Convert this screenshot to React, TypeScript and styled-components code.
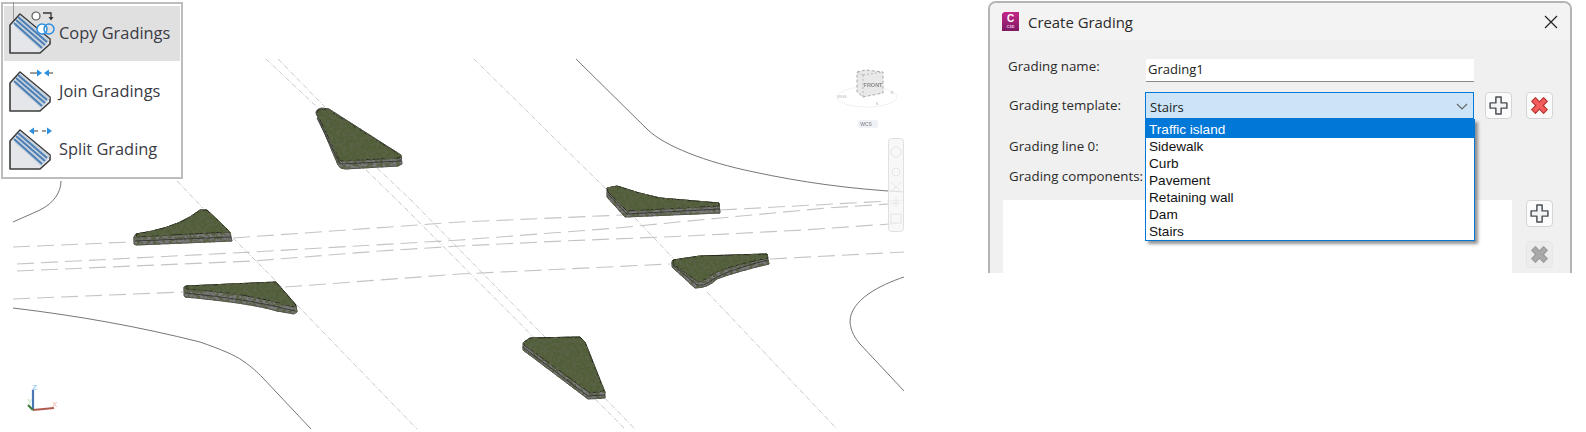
import React from "react";
import styled, { createGlobalStyle } from "styled-components";

const GlobalStyle = createGlobalStyle`
  html, body { margin: 0; padding: 0; background: #fff; }
`;

const Page = styled.div`
  display: flex;
  align-items: flex-start;
  width: 1586px;
  height: 432px;
  overflow: hidden;
  background: #fff;
  font-family: "Open Sans", "Liberation Sans", sans-serif;
`;

/* ---------- drawing area ---------- */
const Viewport = styled.div`
  position: relative;
  flex: 0 0 904px;
  height: 432px;
`;

const Drawing = styled.svg`
  display: block;
  width: 904px;
  height: 432px;
`;

const RibbonMenu = styled.div`
  position: absolute;
  left: 1px;
  top: 2px;
  box-sizing: border-box;
  width: 182px;
  height: 177px;
  padding: 2px 1px 0;
  display: flex;
  flex-direction: column;
  gap: 3px;
  background: #fff;
  border: 2px solid #bdbdbd;
`;

/* stray leader from the drawing that sits on top of the panel */
const Leader = styled.div`
  position: absolute;
  left: 10px;
  top: -2px;
  width: 1px;
  height: 18px;
  background: #9a9a9a;
`;

const MenuRow = styled.div<{ $active?: boolean }>`
  display: flex;
  align-items: center;
  height: 55px;
  flex: none;
  background: ${(p) => (p.$active ? "#e0e0e0" : "transparent")};
  color: #3a3a44;
  font-size: 16.4px;
  white-space: nowrap;
`;

const MenuText = styled.span`
  margin: -2px 0 0 1px;
`;

const MenuIcon = styled.svg`
  flex: none;
  width: 52px;
  height: 55px;
  margin-left: 2px;
`;

/* ---------- dialog ---------- */
const Dialog = styled.div`
  box-sizing: border-box;
  flex: none;
  width: 584px;
  height: 272px;
  margin: 1px 0 0 84px;
  border: 2px solid #b4b4b4;
  border-bottom: none;
  border-radius: 8px 8px 0 0;
  background: #f0f0f0;
  overflow: hidden;
`;

const TitleBar = styled.div`
  display: flex;
  align-items: center;
  height: 37px;
  padding: 0 12px 0 11px;
  background: #f3f3f3;
  color: #2a2a2a;
  font-size: 14.9px;
`;

const AppBadge = styled.svg`
  width: 19px;
  height: 21px;
  margin-right: 8px;
`;

const CloseIcon = styled.svg`
  width: 14px;
  height: 14px;
  margin-left: auto;
`;

const Body = styled.div`
  padding: 18px 0 0 18px;
`;

const FormRow = styled.div<{ $height: number; $gap: number }>`
  display: flex;
  align-items: center;
  height: ${(p) => p.$height}px;
  margin-bottom: ${(p) => p.$gap}px;
`;

const Label = styled.div<{ $inset?: number; $nudge?: number }>`
  flex: none;
  width: 137px;
  padding-left: ${(p) => p.$inset ?? 0}px;
  margin-top: ${(p) => p.$nudge ?? 0}px;
  box-sizing: border-box;
  color: #2b2b2b;
  font-size: 13.3px;
  white-space: nowrap;
  overflow: hidden;
`;

const NameInput = styled.div`
  box-sizing: border-box;
  width: 328px;
  height: 24px;
  margin-left: 1px;
  padding-left: 2px;
  line-height: 21px;
  background: #fff;
  border-bottom: 1px solid #8a8a8a;
  border-top: 1px solid #eee;
  color: #222;
  font-size: 13px;
`;

const ComboWrap = styled.div`
  position: relative;
  width: 329px;
  height: 27px;
  margin-right: 11px;
`;

const ComboField = styled.div`
  box-sizing: border-box;
  display: flex;
  align-items: center;
  justify-content: space-between;
  height: 27px;
  padding: 2px 5px 0 4px;
  background: #cce4f7;
  border: 1px solid #0078d7;
  color: #222;
  font-size: 13px;
`;

const DropList = styled.div`
  position: absolute;
  left: 0;
  top: 27px;
  z-index: 2;
  box-sizing: border-box;
  width: 330px;
  height: 122px;
  background: #fff;
  border: 1px solid #0078d7;
  border-top: none;
  box-shadow: 3px 3px 3px rgba(60, 60, 60, 0.55);
  font-family: "Liberation Sans", Arial, sans-serif;
  font-size: 13.6px;
`;

const DropItem = styled.div<{ $selected?: boolean }>`
  height: ${(p) => (p.$selected ? 19 : 17)}px;
  line-height: ${(p) => (p.$selected ? 21 : 17)}px;
  padding-left: 3px;
  background: ${(p) => (p.$selected ? "#0078d7" : "transparent")};
  color: ${(p) => (p.$selected ? "#fff" : "#111")};
`;

const ToolButton = styled.div<{ $disabled?: boolean }>`
  box-sizing: border-box;
  flex: none;
  display: flex;
  align-items: center;
  justify-content: center;
  width: 27px;
  height: 27px;
  border-radius: 4px;
  background: ${(p) => (p.$disabled ? "#ececec" : "#fbfbfb")};
  border: 1px solid ${(p) => (p.$disabled ? "#e6e6e6" : "#d4d4d4")};
`;

const ComboTools = styled.div`
  display: flex;
  gap: 14px;
`;

const ComponentsArea = styled.div`
  display: flex;
  gap: 14px;
  margin-left: -5px;
`;

const ComponentList = styled.div`
  flex: none;
  width: 509px;
  height: 200px;
  background: #fff;
`;

const SideTools = styled.div`
  display: flex;
  flex-direction: column;
  gap: 14px;
`;

/* ---------- drawing data ---------- */
const kerbLines = [
  "M576 59 L648 130 C665 146 705 162 754 172 C800 182 850 189 904 192",
  "M61 181 C61 192 54 203 40 210 L13 222",
  "M13 308 C80 316 140 327 200 342 C220 349 235 355 243 361 C252 367 258 373 262 377 L311 429",
  "M904 277 C880 285 850 300 850 322 C851 332 855 338 860 344 L904 391",
];

const laneLines = [
  "M13 247 L130 242",
  "M233 238 L460 222 L623 215",
  "M720 210 L890 201 L904 200",
  "M17 264 L253 252 L460 240 L617 228 L720 218 L827 208 L904 203",
  "M17 271 L133 266 L253 261 L380 251 L460 246 L563 241 L687 236 L803 230 L904 223",
  "M13 299 L183 292",
  "M285 287 L460 274 L670 264",
  "M770 259 L904 252",
];

const axisLines = [
  "M266 59 L318 108",
  "M278 59 L325 107",
  "M377 168 L410 199 L635 429",
  "M366 170 L402 205 L625 429",
  "M474 59 L607 190",
  "M635 218 L673 258",
  "M707 292 L837 429",
  "M177 181 L203 208",
  "M233 238 L277 282",
  "M297 305 L417 429",
];

type Island = { base: string; edge: string; top: string };

const islands: Island[] = [
  {
    base: "M316 113 Q316 109 322 108 L329 109 L401 155 L402 164 L398 166 L345 169 Q340 169 338 165 Z",
    edge: "M317 118 L340 164 L401 161",
    top: "M318 110 L327 109 L400 155 L400 158 L341 161 Q339 161 338 157 L317 114 Z",
  },
  {
    base: "M134 237 L136 234 Q170 229 190 217 L200 210 L207 210 L230 232 L232 241 L136 245 L134 244 Z",
    edge: "M135 241 L231 237",
    top: "M136 234 Q170 229 190 217 L200 210 L207 210 L230 232 L137 237 Z",
  },
  {
    base: "M184 287 L186 286 L276 282 L296 305 L297 312 L294 314 L277 311 Q250 303 185 297 L184 295 Z",
    edge: "M185 293 Q250 299 295 311",
    top: "M186 286 L276 282 L296 305 L293 307 Q250 293 186 289 Z",
  },
  {
    base: "M607 188 L617 186 Q640 194 660 198 L719 203 L720 213 L625 217 L607 197 Z",
    edge: "M608 194 L627 214 L720 209",
    top: "M607 188 L617 186 Q640 194 660 198 L719 203 L719 206 L627 211 L608 192 Z",
  },
  {
    base: "M672 262 L673 260 L700 256 L767 254 L769 264 Q735 272 717 279 Q708 288 695 288 L672 267 Z",
    edge: "M673 265 L697 285 Q703 286 708 283 Q720 272 768 260",
    top: "M673 260 L700 256 L767 254 L768 258 Q720 268 710 276 Q703 282 697 281 L673 264 Z",
  },
  {
    base: "M523 343 L530 338 L580 337 L585 342 L605 392 L605 398 L588 399 L523 350 Z",
    edge: "M523 347 L588 396 L605 395",
    top: "M524 342 L530 338 L580 337 L585 342 L604 391 L590 393 L524 345 Z",
  },
];

/* tool glyph shared by all three ribbon commands */
const GradingShape = () => (
  <g>
    <path d="M4 19 L14 8 L44 33 V38 L34 47 H4 Z" fill="#e4e6ea" stroke="#3c3c3c" strokeWidth="1.6" strokeLinejoin="round" />
    <path d="M14 9 L44 34 L35 44 L8 20 Z" fill="#c6d2de" />
    <path d="M12 11 L41 36 M10 14 L39 39 M8 17 L36 42" stroke="#4d7fb4" strokeWidth="2" fill="none" />
  </g>
);

const CopyGlyph = () => (
  <MenuIcon viewBox="0 0 52 55">
    <GradingShape />
    <circle cx="30" cy="10" r="4" fill="#fff" stroke="#555" strokeWidth="1.2" />
    <path d="M37 7 H45 V12" fill="none" stroke="#333" strokeWidth="1.3" />
    <path d="M42.5 11 H47.5 L45 14.5 Z" fill="#333" />
    <circle cx="36" cy="23" r="5" fill="#fff" stroke="#2b8fe0" strokeWidth="1.5" />
    <circle cx="43" cy="23" r="5" fill="none" stroke="#2b8fe0" strokeWidth="1.5" />
  </MenuIcon>
);

const JoinGlyph = () => (
  <MenuIcon viewBox="0 0 52 55">
    <GradingShape />
    <path d="M24 9 H33 M41 9 H47" stroke="#3c3c3c" strokeWidth="1" />
    <path d="M31 5.5 L36 9 L31 12.5 Z M43 5.5 L38 9 L43 12.5 Z" fill="#2b8fe0" />
  </MenuIcon>
);

const SplitGlyph = () => (
  <MenuIcon viewBox="0 0 52 55">
    <GradingShape />
    <path d="M27 9 H32 M36 9 H40" stroke="#3c3c3c" strokeWidth="1" />
    <path d="M28 5.5 L23 9 L28 12.5 Z M41 5.5 L46 9 L41 12.5 Z" fill="#2b8fe0" />
  </MenuIcon>
);

const CROSS = "M7.5 2 H12.5 V7.5 H18 V12.5 H12.5 V18 H7.5 V12.5 H2 V7.5 H7.5 Z";

const PlusGlyph = () => (
  <svg width="21" height="21" viewBox="0 0 20 20">
    <path d={CROSS} fill="#f4f4f4" stroke="#4a4f55" strokeWidth="1.4" strokeLinejoin="round" />
  </svg>
);

const RemoveGlyph: React.FC<{ muted?: boolean }> = ({ muted }) => (
  <svg width="21" height="21" viewBox="0 0 20 20">
    <path
      d={CROSS}
      transform="rotate(45 10 10)"
      fill={muted ? "#a9a9a9" : "#f25c5c"}
      stroke={muted ? "#9a9a9a" : "#b8332f"}
      strokeWidth="1.1"
      strokeLinejoin="round"
    />
  </svg>
);

const options = ["Traffic island", "Sidewalk", "Curb", "Pavement", "Retaining wall", "Dam", "Stairs"];

export default function App() {
  return (
    <Page>
      <GlobalStyle />
      <Viewport>
        <Drawing viewBox="0 0 904 432">
          <defs>
            <filter id="turf" x="-5%" y="-5%" width="110%" height="110%">
              <feTurbulence type="fractalNoise" baseFrequency="0.3" numOctaves="3" seed="7" result="n" />
              <feColorMatrix in="n" type="matrix" values="0 0 0 0 0.1  0 0 0 0 0.12  0 0 0 0 0.06  6 0 0 0 -2.5" />
              <feComposite in2="SourceGraphic" operator="in" result="g" />
              <feMerge>
                <feMergeNode in="SourceGraphic" />
                <feMergeNode in="g" />
              </feMerge>
            </filter>
            <filter id="soft">
              <feGaussianBlur stdDeviation="0.6" />
            </filter>
          </defs>

          <g fill="none">
            {axisLines.map((d) => (
              <path key={d} d={d} stroke="#b0b0b0" strokeWidth="0.7" strokeDasharray="5 1.5 1 1.5" />
            ))}
            {laneLines.map((d) => (
              <path key={d} d={d} stroke="#c4c4c4" strokeWidth="1.1" strokeDasharray="17 7" />
            ))}
            {kerbLines.map((d) => (
              <path key={d} d={d} stroke="#777" strokeWidth="1" />
            ))}
          </g>

          {islands.map((isle) => (
            <g key={isle.top}>
              <path d={isle.base} fill="#7a7a7a" stroke="#4c4c4c" strokeWidth="1" strokeLinejoin="round" filter="url(#turf)" />
              <path d={isle.edge} fill="none" stroke="#3a3a3a" strokeWidth="1" />
              <path d={isle.top} fill="#515e37" stroke="#1f2118" strokeWidth="0.9" strokeLinejoin="round" filter="url(#turf)" />
            </g>
          ))}

          {/* orientation cube, ring and UCS pill */}
          <g filter="url(#soft)">
            <ellipse cx="867" cy="97" rx="30" ry="10" fill="none" stroke="#f0f0f0" />
            <path d="M857 72 L866 70 L883 72 V93 L863 97 L857 92 Z" fill="#e9e9e9" stroke="#a8a8a8" strokeDasharray="3 2" />
            <path d="M863 75 V97 M863 75 L883 72 M863 75 L857 72" fill="none" stroke="#b8b8b8" strokeDasharray="2 2" />
            <text x="873" y="87" fontFamily="Liberation Sans" fontSize="5.5" fontWeight="700" fill="#8c8c8c" textAnchor="middle">FRONT</text>
            <text x="842" y="98" fontFamily="Liberation Sans" fontSize="4" fill="#b4b4b4" textAnchor="middle">WGS</text>
            <text x="892" y="94" fontFamily="Liberation Sans" fontSize="4" fill="#b4b4b4" textAnchor="middle">N</text>
            <text x="877" y="105" fontFamily="Liberation Sans" fontSize="4" fill="#b4b4b4" textAnchor="middle">S</text>
            <rect x="858" y="120" width="20" height="8" rx="2" fill="#eef1f6" />
            <text x="866" y="126" fontFamily="Liberation Sans" fontSize="5" fontWeight="700" fill="#9a9a9a" textAnchor="middle">WCS</text>
          </g>

          {/* navigation bar */}
          <g>
            <rect x="888.5" y="138.5" width="15" height="93" rx="3" fill="#f6f6f6" fillOpacity="0.8" stroke="#e0e0e0" />
            <g filter="url(#soft)" fill="none" stroke="#e6e6e6">
              <circle cx="896" cy="152" r="5" />
              <circle cx="896" cy="172" r="4" />
              <path d="M891 182 L901 192 M901 182 L891 192" />
              <path d="M896 197 V207 M892 203 H900" />
              <rect x="891" y="214" width="10" height="9" />
            </g>
          </g>

          {/* UCS tripod */}
          <g fontFamily="Liberation Sans" fontSize="8">
            <path d="M33 409 V390" stroke="#4a78b5" strokeWidth="2.2" />
            <path d="M33 410 L54 408" stroke="#b05a50" strokeWidth="2.2" />
            <path d="M33 410 L28 405" stroke="#3f7d3f" strokeWidth="2.2" />
            <text x="32" y="390" fill="#79b8ef">Z</text>
            <text x="27" y="404" fill="#b7dfb7">Y</text>
            <text x="52" y="407" fill="#efb5a8">X</text>
          </g>
        </Drawing>

        <RibbonMenu>
          <MenuRow $active>
            <CopyGlyph />
            <MenuText>Copy Gradings</MenuText>
          </MenuRow>
          <MenuRow>
            <JoinGlyph />
            <MenuText>Join Gradings</MenuText>
          </MenuRow>
          <MenuRow>
            <SplitGlyph />
            <MenuText>Split Grading</MenuText>
          </MenuRow>
          <Leader />
        </RibbonMenu>
      </Viewport>

      <Dialog>
        <TitleBar>
          <AppBadge viewBox="0 0 19 21">
            <defs>
              <linearGradient id="badge" x1="0" y1="0" x2="0" y2="1">
                <stop offset="0" stopColor="#c5268a" />
                <stop offset="1" stopColor="#7c1a62" />
              </linearGradient>
            </defs>
            <path d="M3 1 H18 V20 H1 V3 Z" fill="url(#badge)" />
            <text x="9.5" y="11" fontFamily="Liberation Sans" fontSize="10" fontWeight="700" fill="#fff" textAnchor="middle">C</text>
            <text x="9.5" y="17" fontFamily="Liberation Sans" fontSize="4" fontWeight="700" fill="#f3d7e8" textAnchor="middle">C3D</text>
          </AppBadge>
          Create Grading
          <CloseIcon viewBox="0 0 14 14">
            <path d="M1 1 L13 13 M13 1 L1 13" stroke="#222" strokeWidth="1.2" />
          </CloseIcon>
        </TitleBar>
        <Body>
          <FormRow $height={24} $gap={10}>
            <Label $nudge={-9}>Grading name:</Label>
            <NameInput>Grading1</NameInput>
          </FormRow>
          <FormRow $height={27} $gap={17}>
            <Label $inset={1} $nudge={-1}>Grading template:</Label>
            <ComboWrap>
              <ComboField>
                Stairs
                <svg width="12" height="7" viewBox="0 0 12 7">
                  <path d="M1 1 L6 6 L11 1" fill="none" stroke="#666" strokeWidth="1.2" />
                </svg>
              </ComboField>
              <DropList>
                {options.map((o, i) => (
                  <DropItem key={o} $selected={i === 0}>
                    {o}
                  </DropItem>
                ))}
              </DropList>
            </ComboWrap>
            <ComboTools>
              <ToolButton>
                <PlusGlyph />
              </ToolButton>
              <ToolButton>
                <RemoveGlyph />
              </ToolButton>
            </ComboTools>
          </FormRow>
          <FormRow $height={18} $gap={12}>
            <Label $inset={1} $nudge={2}>Grading line 0:</Label>
          </FormRow>
          <FormRow $height={18} $gap={16}>
            <Label $inset={1} $nudge={2}>Grading components:</Label>
          </FormRow>
          <ComponentsArea>
            <ComponentList />
            <SideTools>
              <ToolButton>
                <PlusGlyph />
              </ToolButton>
              <ToolButton $disabled>
                <RemoveGlyph muted />
              </ToolButton>
            </SideTools>
          </ComponentsArea>
        </Body>
      </Dialog>
    </Page>
  );
}
